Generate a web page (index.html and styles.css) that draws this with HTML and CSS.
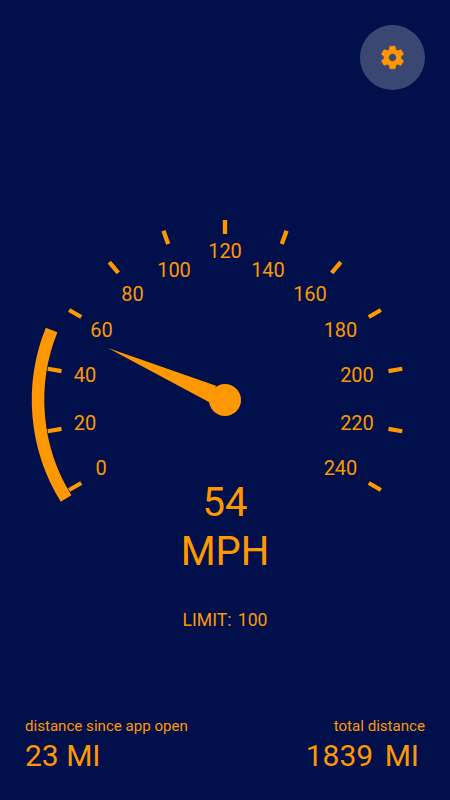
FILE: index.html
```
<!DOCTYPE html>
<html lang="en">
<head>
    <meta charset="UTF-8">
    <meta name="viewport" content="width=device-width, initial-scale=1.0">
    <title>Speedometer</title>
    <link rel="stylesheet" href="styles.css">
</head>
<body>
    <header class="top-bar">
        <button class="settings-btn" aria-label="Settings">
            <svg class="settings-icon" viewBox="0 0 24 24">
                <path d="M19.43 12.98c.04-.32.07-.64.07-.98s-.03-.66-.07-.98l2.11-1.65c.19-.15.24-.42.12-.64l-2-3.46c-.12-.22-.39-.3-.61-.22l-2.49 1c-.52-.4-1.08-.73-1.69-.98l-.38-2.65C14.46 2.18 14.25 2 14 2h-4c-.25 0-.46.18-.49.42l-.38 2.65c-.61.25-1.17.59-1.69.98l-2.49-1c-.23-.09-.49 0-.61.22l-2 3.46c-.13.22-.07.49.12.64l2.11 1.65c-.04.32-.07.65-.07.98s.03.66.07.98l-2.11 1.65c-.19.15-.24.42-.12.64l2 3.46c.12.22.39.3.61.22l2.49-1c.52.4 1.08.73 1.69.98l.38 2.65c.03.24.24.42.49.42h4c.25 0 .46-.18.49-.42l.38-2.65c.61-.25 1.17-.59 1.69-.98l2.49 1c.23.09.49 0 .61-.22l2-3.46c.12-.22.07-.49-.12-.64l-2.11-1.65zM12 15.5c-1.93 0-3.5-1.57-3.5-3.5s1.57-3.5 3.5-3.5 3.5 1.57 3.5 3.5-1.57 3.5-3.5 3.5z"/>
            </svg>
        </button>
    </header>

    <main class="dashboard">
        <!-- dial origin is the needle pivot -->
        <svg class="gauge" viewBox="-200 -190 400 300">
            <path class="gauge-arc" d="M-158.9 98.5 A187 187 0 0 1 -173.4 -70"/>
            <g class="gauge-ticks">
                <path d="M0-180V-166" transform="rotate(-120)"/>
                <path d="M0-180V-166" transform="rotate(-100)"/>
                <path d="M0-180V-166" transform="rotate(-80)"/>
                <path d="M0-180V-166" transform="rotate(-60)"/>
                <path d="M0-180V-166" transform="rotate(-40)"/>
                <path d="M0-180V-166" transform="rotate(-20)"/>
                <path d="M0-180V-166"/>
                <path d="M0-180V-166" transform="rotate(20)"/>
                <path d="M0-180V-166" transform="rotate(40)"/>
                <path d="M0-180V-166" transform="rotate(60)"/>
                <path d="M0-180V-166" transform="rotate(80)"/>
                <path d="M0-180V-166" transform="rotate(100)"/>
                <path d="M0-180V-166" transform="rotate(120)"/>
            </g>
            <g class="gauge-labels">
                <text x="-124" y="75">0</text>
                <text x="-140" y="30">20</text>
                <text x="-140" y="-18">40</text>
                <text x="-123.5" y="-63">60</text>
                <text x="-92.5" y="-99">80</text>
                <text x="-51" y="-123.5">100</text>
                <text x="0" y="-142">120</text>
                <text x="43" y="-123.5">140</text>
                <text x="85" y="-99">160</text>
                <text x="115.5" y="-63">180</text>
                <text x="132" y="-18">200</text>
                <text x="132" y="30">220</text>
                <text x="115.5" y="75">240</text>
            </g>
            <path class="gauge-needle" d="M-117-52L-9-14.3L-15.7 2.3z"/>
            <circle class="gauge-needle" r="16"/>
        </svg>

        <div class="speed">
            <div>54</div>
            <div>MPH</div>
        </div>
        <div class="limit">LIMIT: <span>100</span></div>
    </main>

    <footer class="distances">
        <div class="distance">
            <div class="distance-label">distance since app open</div>
            <div class="distance-value">23 MI</div>
        </div>
        <div class="distance distance-total">
            <div class="distance-label">total distance</div>
            <div class="distance-value">1839 <span>MI</span></div>
        </div>
    </footer>
</body>
</html>
```
FILE: styles.css
```
:root {
    --bg: #01104a;
    --accent: #ff9800;
}

* {
    margin: 0;
    padding: 0;
    box-sizing: border-box;
}

body {
    height: 100vh;
    display: flex;
    flex-direction: column;
    overflow: hidden;
    background: var(--bg);
    color: var(--accent);
    font-family: Roboto, sans-serif;
}

.top-bar {
    display: flex;
    justify-content: flex-end;
    padding: 25px 25px 0;
}

.settings-btn {
    width: 65px;
    height: 65px;
    display: flex;
    align-items: center;
    justify-content: center;
    border: none;
    border-radius: 50%;
    background: rgba(255, 255, 255, 0.23);
    cursor: pointer;
}

.settings-icon {
    width: 27px;
    height: 27px;
    fill: var(--accent);
    stroke: var(--accent);
    stroke-width: 0.5;
}

.dashboard {
    flex: 1;
    display: flex;
    flex-direction: column;
    align-items: center;
    padding-top: 120px;
}

.gauge {
    width: 400px;
    height: 300px;
    flex-shrink: 0;
    margin-bottom: -32px;
}

.gauge-arc {
    fill: none;
    stroke: var(--accent);
    stroke-width: 12.5;
}

.gauge-ticks {
    stroke: var(--accent);
    stroke-width: 4.3;
}

.gauge-labels {
    fill: var(--accent);
    font-size: 20px;
    text-anchor: middle;
}

.gauge-needle {
    fill: var(--accent);
}

.speed {
    font-size: 40px;
    line-height: 49px;
    text-align: center;
}

.limit {
    margin-top: 33px;
    font-size: 17.6px;
    line-height: 22px;
}

.limit span {
    margin-left: 2px;
}

.distances {
    display: flex;
    justify-content: space-between;
    padding: 0 25px 24px;
}

.distance-total {
    text-align: right;
}

.distance-label {
    font-size: 15.1px;
    line-height: 20px;
}

.distance-value {
    font-size: 30px;
    line-height: 40px;
}

.distance-total .distance-value {
    padding-right: 6px;
}

.distance-total span {
    margin-left: 4px;
}
```
